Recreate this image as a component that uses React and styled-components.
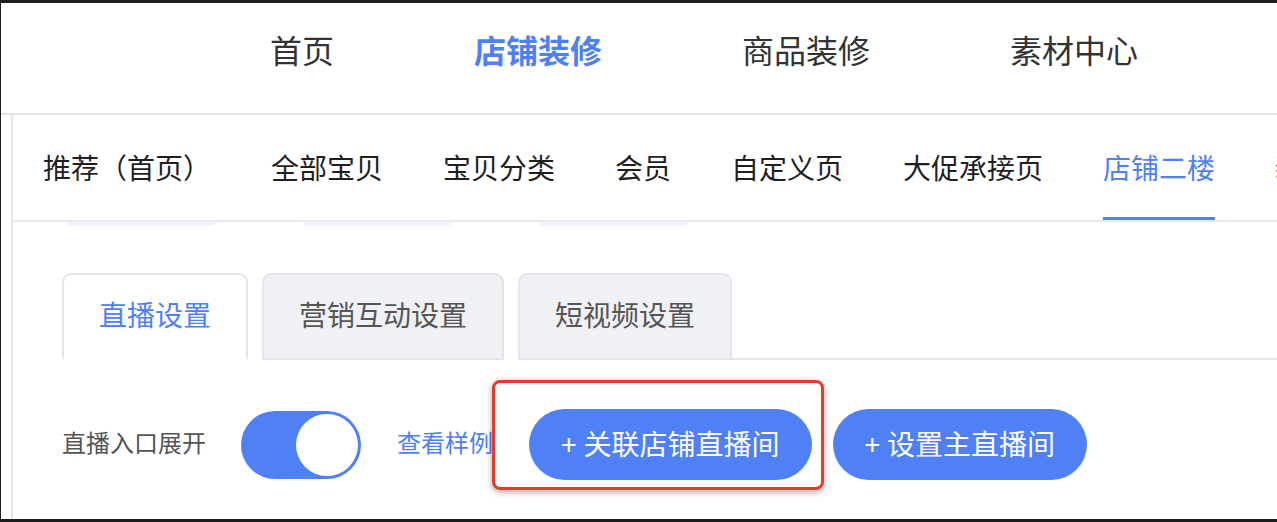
import React from "react";
import styled, { createGlobalStyle } from "styled-components";

const Global = createGlobalStyle`
  html, body { margin: 0; padding: 0; background: #fff; }
  body { font-family: "Noto Sans CJK SC", "Noto Sans", sans-serif; }
  * { box-sizing: border-box; }
`;

const BLUE = "#4f80f6";

const Frame = styled.div`
  width: 1277px;
  height: 522px;
  overflow: hidden;
  border-top: 3px solid #1d1d1f;
  border-left: 1px solid #1d1d1f;
  border-bottom: 3px solid #1d1d1f;
  display: flex;
  flex-direction: column;
  background: #fff;
`;

const Header = styled.header`
  height: 112px;
  flex: none;
  display: flex;
  align-items: center;
  padding: 0 0 18px 269px;
  gap: 140px;
  border-bottom: 2px solid #e2e4e9;
`;

const NavItem = styled.a`
  font-size: 32px;
  line-height: 1;
  color: ${(p) => (p.$active ? BLUE : "#333")};
  font-weight: ${(p) => (p.$active ? 600 : 400)};
  white-space: nowrap;
`;

const Body = styled.main`
  flex: 1;
  margin-left: 10px;
  border-left: 2px solid #e4e6eb;
  display: flex;
  flex-direction: column;
  min-height: 0;
`;

const SubNav = styled.nav`
  height: 107px;
  flex: none;
  display: flex;
  padding-left: 30px;
  gap: 60px;
  border-bottom: 2px solid #e8e9ee;
  white-space: nowrap;
  overflow: hidden;
`;

const SubItem = styled.a`
  display: flex;
  align-items: center;
  font-size: 28px;
  color: ${(p) => (p.$active ? BLUE : "#1f1f1f")};
  border-bottom: 3px solid ${(p) => (p.$active ? BLUE : "transparent")};
  padding-top: 1px;
  flex: none;
`;

const PeekRow = styled.div`
  height: 4px;
  flex: none;
  display: flex;
  padding-left: 54px;
  gap: 88px;
`;

const Peek = styled.span`
  width: ${(p) => p.$w}px;
  height: 4px;
  background: #eef3fd;
  border-radius: 0 0 6px 6px;
`;

const TabBar = styled.div`
  display: flex;
  padding-left: 49px;
  margin-top: 47px;
  flex: none;
  gap: 14px;
`;

const Tab = styled.div`
  height: 87px;
  display: flex;
  align-items: center;
  padding: 0 35px 5px;
  font-size: 28px;
  border: 2px solid #e4e5ea;
  border-bottom-color: ${(p) => (p.$active ? "#fff" : "#e4e5ea")};
  border-radius: 9px 9px 0 0;
  background: ${(p) => (p.$active ? "#fff" : "#f0f1f5")};
  color: ${(p) => (p.$active ? BLUE : "#555")};
  white-space: nowrap;
`;

const TabFill = styled.div`
  flex: 1;
  border-bottom: 2px solid #e4e5ea;
  margin-left: -14px;
`;

const Controls = styled.div`
  display: flex;
  align-items: center;
  padding-left: 49px;
  margin-top: 49px;
  height: 71px;
  flex: none;
`;

const Label = styled.span`
  font-size: 24px;
  line-height: 1;
  padding-bottom: 6px;
  color: #555;
  white-space: nowrap;
`;

const Switch = styled.button`
  margin-left: 35px;
  width: 120px;
  height: 68px;
  border-radius: 34px;
  border: none;
  padding: 3px;
  background: ${BLUE};
  display: flex;
  justify-content: flex-end;
  align-items: center;
  cursor: pointer;
`;

const Knob = styled.span`
  width: 62px;
  height: 62px;
  border-radius: 50%;
  background: #fff;
`;

const LinkText = styled.a`
  margin-left: 36px;
  font-size: 24px;
  line-height: 1;
  padding-bottom: 6px;
  color: ${BLUE};
  white-space: nowrap;
`;

const Marked = styled.div`
  position: relative;
  margin-left: 36px;
  display: flex;
`;

const RedFrame = styled.span`
  position: absolute;
  left: -37px;
  top: -29px;
  right: -12px;
  bottom: -10px;
  border: 3px solid #e8392c;
  border-radius: 8px;
  box-shadow: 0 2px 6px rgba(0, 0, 0, 0.35);
  pointer-events: none;
`;

const PillButton = styled.button`
  margin-left: ${(p) => p.$ml || 0}px;
  height: 71px;
  padding: 0 32px 3px;
  border: none;
  border-radius: 36px;
  background: ${BLUE};
  color: #fff;
  font-family: inherit;
  font-size: 28px;
  white-space: nowrap;
  display: flex;
  align-items: center;
  cursor: pointer;
`;

const Plus = styled.span`
  font-size: 28px;
  margin-right: 7px;
`;

export default function App() {
  const nav = ["首页", "店铺装修", "商品装修", "素材中心"];
  const sub = ["推荐（首页）", "全部宝贝", "宝贝分类", "会员", "自定义页", "大促承接页", "店铺二楼", "装修设置"];
  const tabs = ["直播设置", "营销互动设置", "短视频设置"];
  return (
    <>
      <Global />
      <Frame>
        <Header>
          {nav.map((n, i) => (
            <NavItem key={n} $active={i === 1}>{n}</NavItem>
          ))}
        </Header>
        <Body>
          <SubNav>
            {sub.map((s, i) => (
              <SubItem key={s} $active={i === 6}>{s}</SubItem>
            ))}
          </SubNav>
          <PeekRow>
            <Peek $w={148} />
            <Peek $w={148} />
            <Peek $w={148} />
          </PeekRow>
          <TabBar>
            {tabs.map((t, i) => (
              <Tab key={t} $active={i === 0}>{t}</Tab>
            ))}
            <TabFill />
          </TabBar>
          <Controls>
            <Label>直播入口展开</Label>
            <Switch aria-label="toggle">
              <Knob />
            </Switch>
            <LinkText>查看样例</LinkText>
            <Marked>
              <PillButton>
                <Plus>+</Plus>关联店铺直播间
              </PillButton>
              <RedFrame />
            </Marked>
            <PillButton $ml={21}>
              <Plus>+</Plus>设置主直播间
            </PillButton>
          </Controls>
        </Body>
      </Frame>
    </>
  );
}
